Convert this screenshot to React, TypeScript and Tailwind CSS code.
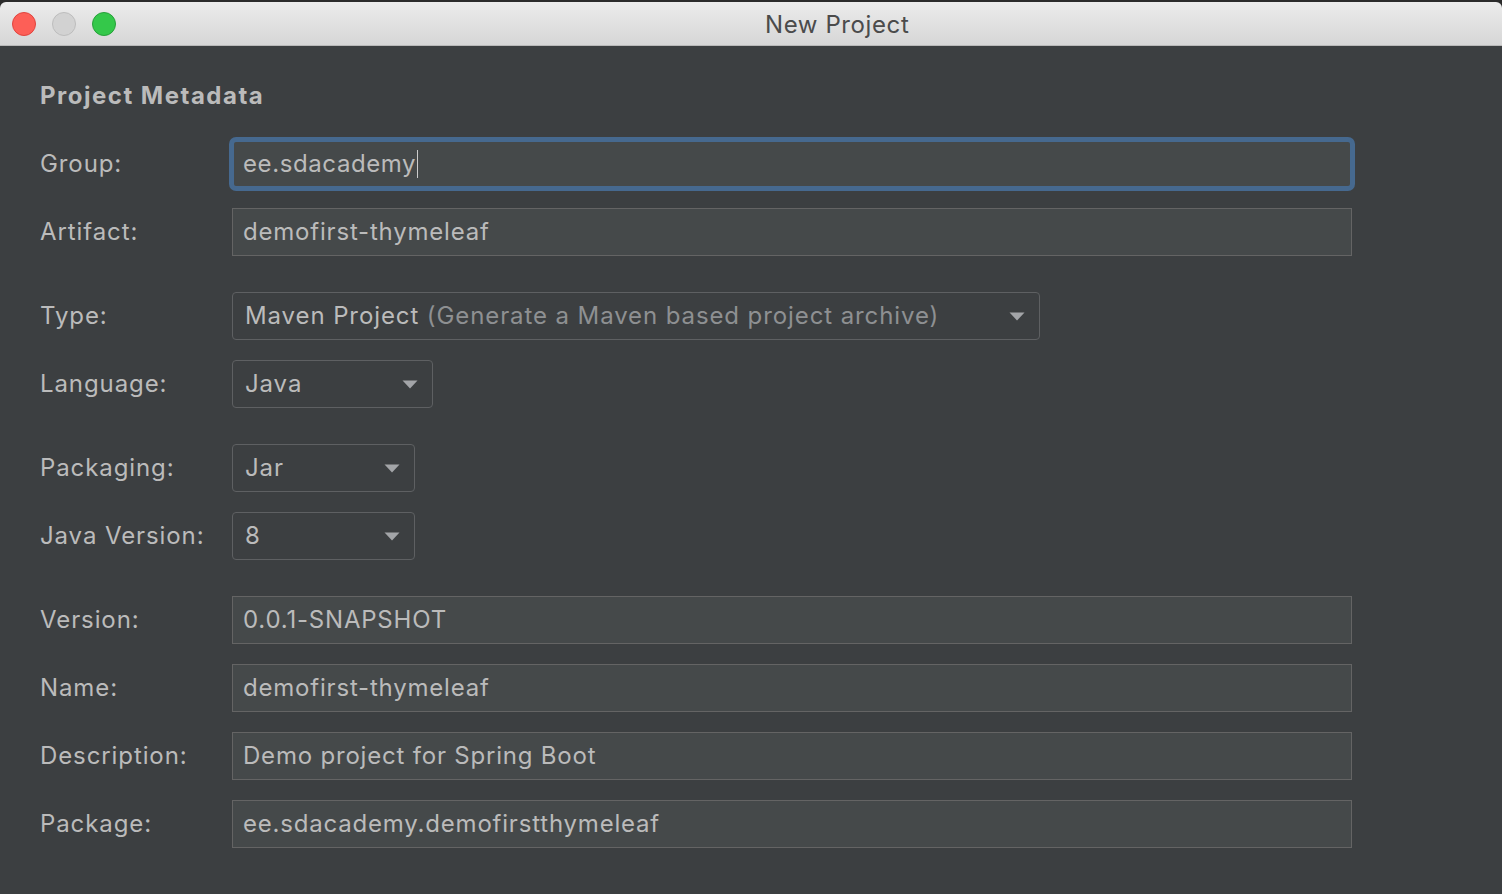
import type { ReactNode } from 'react';

const font = { fontFamily: 'Inter, "Open Sans", "Liberation Sans", sans-serif' };

function Row({ label, children, className = '' }: { label: string; children: ReactNode; className?: string }) {
  return (
    <div className={`flex h-12 items-center ${className}`}>
      <div className="w-[192px] shrink-0 text-[24px] tracking-[0.9px] text-[#bbbbbb]">{label}</div>
      {children}
    </div>
  );
}

function Field({ value, focused = false }: { value: string; focused?: boolean }) {
  if (focused) {
    return (
      <div className="flex h-12 w-[1120px] items-center rounded-[4px] border-2 border-[#46698f] bg-[#45494a] pl-[9px] shadow-[0_0_0_3px_#46698f]">
        <span className="text-[24px] tracking-[0.6px] text-[#bbbbbb]">{value}</span>
        <span className="ml-[1px] h-[28px] w-px bg-[#cccccc]" />
      </div>
    );
  }
  return (
    <div className="flex h-12 w-[1120px] items-center border border-[#646464] bg-[#45494a] pl-[10px] text-[24px] tracking-[0.8px] text-[#bbbbbb]">
      {value}
    </div>
  );
}

function Arrow() {
  return (
    <svg width="16" height="9" viewBox="0 0 16 9" className="shrink-0">
      <path d="M0.5 0.5 L15.5 0.5 L8 8.5 Z" fill="#a3a5a8" />
    </svg>
  );
}

function Select({ width, children }: { width: string; children: ReactNode }) {
  return (
    <div className={`flex h-12 ${width} items-center justify-between rounded-[4px] border border-[#5e6062] bg-[#3c3f41] pl-[12px] pr-[14px] text-[24px] tracking-[0.9px] text-[#bbbbbb]`}>
      <span className="whitespace-nowrap">{children}</span>
      <Arrow />
    </div>
  );
}

export default function App() {
  return (
    <div className="flex h-[894px] w-[1502px] flex-col overflow-hidden bg-[#2b2b2b]" style={font}>
      <div className="mt-[2px] flex h-[44px] shrink-0 items-center rounded-t-[6px] border-b border-[#b9b9b9] bg-gradient-to-b from-[#ececec] to-[#d6d6d6] pl-[12px]">
        <div className="flex gap-4">
          <span className="h-6 w-6 rounded-full border border-[#e0443e] bg-[#fd5f57]" />
          <span className="h-6 w-6 rounded-full border border-[#bdbdbd] bg-[#d2d2d2]" />
          <span className="h-6 w-6 rounded-full border border-[#27a03a] bg-[#34c84a]" />
        </div>
        <div className="ml-[649px] pt-[3px] text-[24px] tracking-[0.6px] text-[#4b4b4b]">New Project</div>
      </div>

      <div className="flex-1 bg-[#3c3f41] pl-[40px] pt-[32px]">
        <div className="text-[24px] font-bold tracking-[1.5px] text-[#bbbbbb]">Project Metadata</div>

        <Row label="Group:" className="mt-[26px]">
          <Field value="ee.sdacademy" focused />
        </Row>
        <Row label="Artifact:" className="mt-[20px]">
          <Field value="demofirst-thymeleaf" />
        </Row>

        <Row label="Type:" className="mt-[36px]">
          <Select width="w-[808px]">
            Maven Project <span className="text-[#8e9092]">(Generate a Maven based project archive)</span>
          </Select>
        </Row>
        <Row label="Language:" className="mt-[20px]">
          <Select width="w-[201px]">Java</Select>
        </Row>

        <Row label="Packaging:" className="mt-[36px]">
          <Select width="w-[183px]">Jar</Select>
        </Row>
        <Row label="Java Version:" className="mt-[20px]">
          <Select width="w-[183px]">8</Select>
        </Row>

        <Row label="Version:" className="mt-[36px]">
          <Field value="0.0.1-SNAPSHOT" />
        </Row>
        <Row label="Name:" className="mt-[20px]">
          <Field value="demofirst-thymeleaf" />
        </Row>
        <Row label="Description:" className="mt-[20px]">
          <Field value="Demo project for Spring Boot" />
        </Row>
        <Row label="Package:" className="mt-[20px]">
          <Field value="ee.sdacademy.demofirstthymeleaf" />
        </Row>
      </div>
    </div>
  );
}
